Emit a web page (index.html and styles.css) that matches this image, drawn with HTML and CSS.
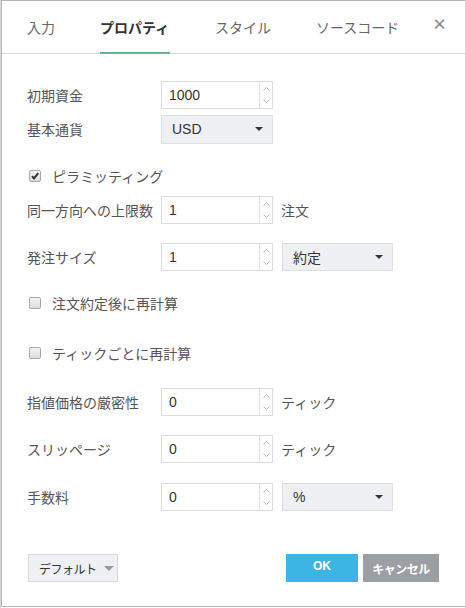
FILE: index.html
```html
<!DOCTYPE html>
<html lang="ja">
<head>
<meta charset="utf-8">
<link rel="stylesheet" href="styles.css">
</head>
<body>
<div class="edge"></div>
<div class="dialog">
  <div class="tabs">
    <div class="tab t1">入力</div>
    <div class="tab t2 active">プロパティ</div>
    <div class="tab t3">スタイル</div>
    <div class="tab t4">ソースコード</div>
    <div class="close">×</div>
  </div>
  <div class="form">
    <div class="row r1">
      <div class="label">初期資金</div>
      <div class="num"><span class="val">1000</span><span class="spin"><svg width="9" height="26" viewBox="0 0 9 26"><path d="M1.5 8.5 L4.5 5.5 L7.5 8.5" fill="none" stroke="#b8bcc2" stroke-width="1"/><path d="M1.5 17.5 L4.5 20.5 L7.5 17.5" fill="none" stroke="#b8bcc2" stroke-width="1"/></svg></span></div>
    </div>
    <div class="row r2">
      <div class="label">基本通貨</div>
      <div class="sel"><span>USD</span><i class="caret"></i></div>
    </div>
    <div class="row r3">
      <span class="cb checked"><svg width="10" height="10" viewBox="0 0 10 10"><path d="M2 5.2 L4 7.5 L8.3 2.2" fill="none" stroke="#333" stroke-width="2"/></svg></span>
      <span class="cbl">ピラミッティング</span>
    </div>
    <div class="row r4">
      <div class="label">同一方向への上限数</div>
      <div class="num"><span class="val">1</span><span class="spin"><svg width="9" height="26" viewBox="0 0 9 26"><path d="M1.5 8.5 L4.5 5.5 L7.5 8.5" fill="none" stroke="#b8bcc2" stroke-width="1"/><path d="M1.5 17.5 L4.5 20.5 L7.5 17.5" fill="none" stroke="#b8bcc2" stroke-width="1"/></svg></span></div>
      <div class="unit">注文</div>
    </div>
    <div class="row r5">
      <div class="label">発注サイズ</div>
      <div class="num"><span class="val">1</span><span class="spin"><svg width="9" height="26" viewBox="0 0 9 26"><path d="M1.5 8.5 L4.5 5.5 L7.5 8.5" fill="none" stroke="#b8bcc2" stroke-width="1"/><path d="M1.5 17.5 L4.5 20.5 L7.5 17.5" fill="none" stroke="#b8bcc2" stroke-width="1"/></svg></span></div>
      <div class="sel sel2"><span>約定</span><i class="caret"></i></div>
    </div>
    <div class="row r6">
      <span class="cb"></span>
      <span class="cbl">注文約定後に再計算</span>
    </div>
    <div class="row r7">
      <span class="cb"></span>
      <span class="cbl">ティックごとに再計算</span>
    </div>
    <div class="row r8">
      <div class="label">指値価格の厳密性</div>
      <div class="num"><span class="val">0</span><span class="spin"><svg width="9" height="26" viewBox="0 0 9 26"><path d="M1.5 8.5 L4.5 5.5 L7.5 8.5" fill="none" stroke="#b8bcc2" stroke-width="1"/><path d="M1.5 17.5 L4.5 20.5 L7.5 17.5" fill="none" stroke="#b8bcc2" stroke-width="1"/></svg></span></div>
      <div class="unit">ティック</div>
    </div>
    <div class="row r9">
      <div class="label">スリッページ</div>
      <div class="num"><span class="val">0</span><span class="spin"><svg width="9" height="26" viewBox="0 0 9 26"><path d="M1.5 8.5 L4.5 5.5 L7.5 8.5" fill="none" stroke="#b8bcc2" stroke-width="1"/><path d="M1.5 17.5 L4.5 20.5 L7.5 17.5" fill="none" stroke="#b8bcc2" stroke-width="1"/></svg></span></div>
      <div class="unit">ティック</div>
    </div>
    <div class="row r10">
      <div class="label">手数料</div>
      <div class="num"><span class="val">0</span><span class="spin"><svg width="9" height="26" viewBox="0 0 9 26"><path d="M1.5 8.5 L4.5 5.5 L7.5 8.5" fill="none" stroke="#b8bcc2" stroke-width="1"/><path d="M1.5 17.5 L4.5 20.5 L7.5 17.5" fill="none" stroke="#b8bcc2" stroke-width="1"/></svg></span></div>
      <div class="sel sel2"><span>%</span><i class="caret"></i></div>
    </div>
  </div>
  <div class="footer">
    <div class="defbtn">デフォルト<i class="caret gray"></i></div>
    <div class="spacer"></div>
    <div class="btn ok">OK</div>
    <div class="btn cancel">キャンセル</div>
  </div>
</div>
</body>
</html>
```
FILE: styles.css
```css
* { box-sizing: border-box; }
html, body { margin: 0; padding: 0; background: #fff; }
body {
  display: flex;
  width: 465px;
  height: 608px;
  overflow: hidden;
  font-family: "Noto Sans CJK JP", "Noto Sans", sans-serif;
  color: #555;
  font-size: 14px;
  white-space: nowrap;
}
.edge { width: 1px; background: #d8d8d8; flex: none; }
.dialog {
  flex: none;
  width: 470px;
  height: 607px;
  border-left: 1px solid #b4b4b4;
  border-top: 1px solid #b4b4b4;
  border-bottom: 1px solid #b4b4b4;
  display: flex;
  flex-direction: column;
}
.tabs {
  height: 53px;
  border-bottom: 1px solid #dadada;
  display: flex;
  align-items: stretch;
  padding-left: 25px;
}
.tab {
  font-size: 14px;
  line-height: 20px;
  color: #666;
  padding-top: 16px;
  border-bottom: 2px solid transparent;
  margin-bottom: -1px;
}
.tab.active { color: #333; font-weight: bold; border-bottom-color: #5cb98a; }
.t1 { width: 73px; }
.t2 { width: 70px; margin-right: 45px; }
.t3 { width: 101px; }
.t4 { width: 116px; }
.close {
  color: #8a8a8a;
  font-size: 15px;
  line-height: 20px;
  padding-top: 13px;
  font-weight: bold;
}
.form { padding-left: 25px; padding-top: 27px; display: flex; flex-direction: column; }
.row { display: flex; align-items: center; height: 28px; }
.r2 { margin-top: 6px; }
.r3 { margin-top: 19px; }
.r4 { margin-top: 6px; }
.r5 { margin-top: 19px; }
.r6 { margin-top: 18px; }
.r7 { margin-top: 22px; }
.r8 { margin-top: 21px; }
.r9 { margin-top: 19px; }
.r10 { margin-top: 20px; }
.label { width: 134px; line-height: 20px; }
.num {
  width: 112px;
  height: 28px;
  border: 1px solid #dcdcdc;
  display: flex;
  align-items: stretch;
}
.val { flex: 1; padding-left: 7px; line-height: 26px; color: #333; font-family: "Liberation Sans", "Noto Sans", sans-serif; font-size: 14px; }
.spin { width: 13px; border-left: 1px solid #e2e2e2; display: flex; justify-content: center; }
.unit { margin-left: 8px; line-height: 20px; }
.sel {
  width: 112px;
  height: 29px;
  background: #eef0f3;
  border: 1px solid #dde0e4;
  display: flex;
  align-items: center;
  padding-left: 10px;
  padding-right: 9px;
  color: #333;
  font-family: "Liberation Sans", "Noto Sans CJK JP", sans-serif;
}
.sel span { flex: 1; }
.sel2 { margin-left: 9px; width: 111px; height: 28px; }
.caret {
  width: 0; height: 0;
  border-left: 4px solid transparent;
  border-right: 4px solid transparent;
  border-top: 4px solid #333;
}
.caret.gray { border-top-color: #999; border-left-width: 5px; border-right-width: 5px; border-top-width: 5px; margin-left: 7px; }
.cb {
  width: 12px; height: 12px;
  border: 1px solid #a9a9a9;
  border-radius: 2px;
  background: linear-gradient(#f4f4f4, #dcdcdc);
  margin-left: 2px;
  display: flex;
  align-items: center;
  justify-content: center;
}
.cbl { margin-left: 11px; line-height: 20px; }
.footer {
  display: flex;
  align-items: center;
  padding-left: 26px;
  margin-top: 43px;
  width: 437px;
}
.defbtn {
  width: 90px;
  height: 28px;
  background: #eef0f3;
  border: 1px solid #d7dade;
  display: flex;
  align-items: center;
  padding-left: 10px;
  font-size: 12px;
  letter-spacing: -0.5px;
  color: #333;
}
.spacer { flex: 1; }
.btn {
  height: 28px;
  color: #fff;
  font-weight: bold;
  font-size: 12px;
  display: flex;
  align-items: center;
  justify-content: center;
}
.ok { width: 72px; background: #3db5e4; font-family: "Liberation Sans", sans-serif; padding-bottom: 4px; }
.cancel { width: 76px; background: #9b9ea3; margin-left: 5px; letter-spacing: -0.5px; }
```
